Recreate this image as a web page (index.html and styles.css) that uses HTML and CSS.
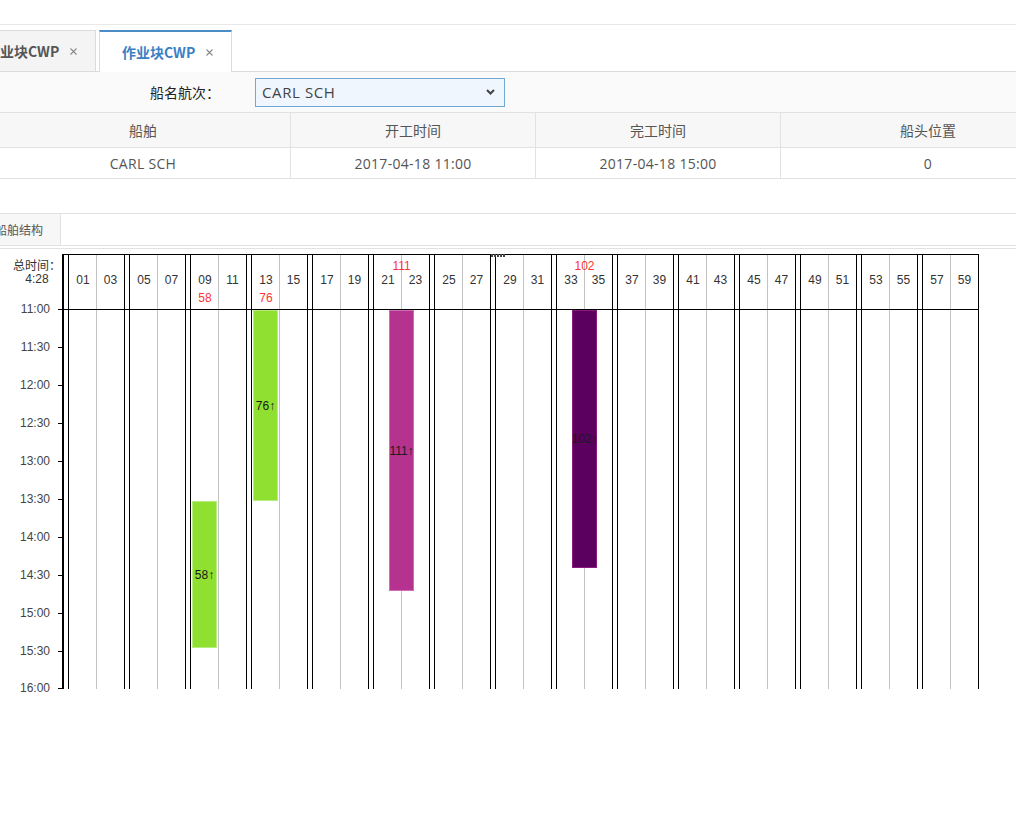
FILE: index.html
```html
<!DOCTYPE html>
<html lang="zh-CN">
<head>
<meta charset="utf-8">
<title>作业块CWP</title>
<link rel="stylesheet" href="styles.css">
</head>
<body>
<div class="topbar"></div>
<div class="tabs">
  <div class="tab first"><span>作业块CWP</span><svg class="close" width="7" height="7" viewBox="0 0 7 7"><path d="M0.5 0.5L6.5 6.5M6.5 0.5L0.5 6.5"/></svg></div>
  <div class="tab active"><span>作业块CWP</span><svg class="close" width="7" height="7" viewBox="0 0 7 7"><path d="M0.5 0.5L6.5 6.5M6.5 0.5L0.5 6.5"/></svg></div>
</div>
<div class="form">
  <span class="label">船名航次：</span>
  <div class="select"><span>CARL SCH</span><svg width="9" height="6" viewBox="0 0 9 6"><path d="M1 1L4.5 4.5L8 1" fill="none" stroke="#444" stroke-width="2"/></svg></div>
</div>
<div class="thead">
  <div class="cell c1">船舶</div><div class="cell c2">开工时间</div><div class="cell c3">完工时间</div><div class="cell c4">船头位置</div>
</div>
<div class="trow">
  <div class="cell c1">CARL SCH</div><div class="cell c2">2017-04-18 11:00</div><div class="cell c3">2017-04-18 15:00</div><div class="cell c4">0</div>
</div>
<div class="spacer"></div>
<div class="subtabs"><div class="subtab">船舶结构</div></div>
<div class="sep"></div>
<div class="chart-wrap">
<div class="chart">
  <div class="axis">
    <div class="axis-title"><div>总时间：</div><div>4:28</div></div>
    <div class="tick" style="top:55px"></div><div class="tlabel" style="top:48px">11:00</div>
    <div class="tick" style="top:93px"></div><div class="tlabel" style="top:86px">11:30</div>
    <div class="tick" style="top:131px"></div><div class="tlabel" style="top:124px">12:00</div>
    <div class="tick" style="top:169px"></div><div class="tlabel" style="top:162px">12:30</div>
    <div class="tick" style="top:207px"></div><div class="tlabel" style="top:200px">13:00</div>
    <div class="tick" style="top:245px"></div><div class="tlabel" style="top:238px">13:30</div>
    <div class="tick" style="top:283px"></div><div class="tlabel" style="top:276px">14:00</div>
    <div class="tick" style="top:321px"></div><div class="tlabel" style="top:314px">14:30</div>
    <div class="tick" style="top:359px"></div><div class="tlabel" style="top:352px">15:00</div>
    <div class="tick" style="top:397px"></div><div class="tlabel" style="top:390px">15:30</div>
    <div class="tick" style="top:434px"></div><div class="tlabel" style="top:427px">16:00</div>
  </div>
  <div class="axis-line"></div>
  <div class="plot">
    <div class="dots"></div>
    <div class="hdr-row">
      <div class="bay bay-h"><div class="r40"></div><div class="nums"><span>01</span><span>03</span></div><div class="r20"><span></span><span></span></div></div>
      <div class="bay bay-h"><div class="r40"></div><div class="nums"><span>05</span><span>07</span></div><div class="r20"><span></span><span></span></div></div>
      <div class="bay bay-h"><div class="r40"></div><div class="nums"><span>09</span><span>11</span></div><div class="r20"><span>58</span><span></span></div></div>
      <div class="bay bay-h"><div class="r40"></div><div class="nums"><span>13</span><span>15</span></div><div class="r20"><span>76</span><span></span></div></div>
      <div class="bay bay-h"><div class="r40"></div><div class="nums"><span>17</span><span>19</span></div><div class="r20"><span></span><span></span></div></div>
      <div class="bay bay-h"><div class="r40">111</div><div class="nums"><span>21</span><span>23</span></div><div class="r20"><span></span><span></span></div></div>
      <div class="bay bay-h"><div class="r40"></div><div class="nums"><span>25</span><span>27</span></div><div class="r20"><span></span><span></span></div></div>
      <div class="bay bay-h"><div class="r40"></div><div class="nums"><span>29</span><span>31</span></div><div class="r20"><span></span><span></span></div></div>
      <div class="bay bay-h"><div class="r40">102</div><div class="nums"><span>33</span><span>35</span></div><div class="r20"><span></span><span></span></div></div>
      <div class="bay bay-h"><div class="r40"></div><div class="nums"><span>37</span><span>39</span></div><div class="r20"><span></span><span></span></div></div>
      <div class="bay bay-h"><div class="r40"></div><div class="nums"><span>41</span><span>43</span></div><div class="r20"><span></span><span></span></div></div>
      <div class="bay bay-h"><div class="r40"></div><div class="nums"><span>45</span><span>47</span></div><div class="r20"><span></span><span></span></div></div>
      <div class="bay bay-h"><div class="r40"></div><div class="nums"><span>49</span><span>51</span></div><div class="r20"><span></span><span></span></div></div>
      <div class="bay bay-h"><div class="r40"></div><div class="nums"><span>53</span><span>55</span></div><div class="r20"><span></span><span></span></div></div>
      <div class="bay bay-h"><div class="r40"></div><div class="nums"><span>57</span><span>59</span></div><div class="r20"><span></span><span></span></div></div>
    </div>
    <div class="body-row">
      <div class="bay bay-b"></div>
      <div class="bay bay-b"></div>
      <div class="bay bay-b"><div class="bar green b20" style="top:191px;height:147px">58↑</div></div>
      <div class="bay bay-b"><div class="bar green b20" style="top:0;height:191px">76↑</div></div>
      <div class="bay bay-b"></div>
      <div class="bay bay-b"><div class="bar magenta b40" style="top:0;height:281px">111↑</div></div>
      <div class="bay bay-b"></div>
      <div class="bay bay-b"></div>
      <div class="bay bay-b"><div class="bar purple b40" style="top:0;height:258px">102↑</div></div>
      <div class="bay bay-b"></div>
      <div class="bay bay-b"></div>
      <div class="bay bay-b"></div>
      <div class="bay bay-b"></div>
      <div class="bay bay-b"></div>
      <div class="bay bay-b"></div>
    </div>
  </div>
</div>
</div>
</body>
</html>
```
FILE: styles.css
```css
html {
  overflow: hidden;
}
html, body {
  margin: 0;
  padding: 0;
  background: #fff;
}
body {
  font-family: "Open Sans", "Noto Sans CJK SC", sans-serif;
  color: #555;
  width: 1016px;
  min-height: 840px;
}
.topbar {
  height: 24px;
  border-bottom: 1px solid #e8e8e8;
}
.tabs {
  display: flex;
  align-items: flex-end;
  gap: 3px;
  height: 41px;
  padding-top: 5px;
  border-bottom: 1px solid #dcdcdc;
}
.tab {
  box-sizing: border-box;
  flex: none;
  width: 133px;
  height: 41px;
  border: 1px solid #dcdcdc;
  border-bottom: none;
  display: flex;
  align-items: center;
  padding-left: 22px;
  font-family: "Noto Sans CJK SC", "Open Sans", sans-serif;
  font-weight: bold;
  font-size: 14px;
}
.tab .close {
  margin-left: 11px;
  stroke: #8a8a8a;
  stroke-width: 1.1;
}
.tab.first {
  margin-left: -37px;
  background: #f4f4f4;
  color: #555;
}
.tab.active {
  background: #fff;
  color: #3b80c3;
  border-top: 2px solid #4a8dc6;
  height: 42px;
  margin-bottom: -1px;
}
.form {
  height: 40px;
  background: #fafafa;
  border-bottom: 1px solid #e2e2e2;
  display: flex;
  align-items: center;
  padding-left: 150px;
}
.label {
  font-family: "Noto Sans CJK SC", sans-serif;
  font-size: 14px;
  color: #222;
  width: 70px;
  margin-right: 35px;
}
.select {
  box-sizing: border-box;
  width: 250px;
  height: 29px;
  border: 1px solid #72a8d4;
  background: #eff6fe;
  display: flex;
  align-items: center;
  justify-content: space-between;
  padding: 0 9px 0 6px;
  font-size: 15px;
  letter-spacing: 0.6px;
  color: #444;
}
.thead, .trow {
  display: flex;
  margin-left: -4px;
}
.thead {
  background: #f7f7f7;
  height: 34px;
  border-bottom: 1px solid #e2e2e2;
}
.trow {
  height: 30px;
  border-bottom: 1px solid #e2e2e2;
}
.cell {
  box-sizing: border-box;
  flex: none;
  border-right: 1px solid #e2e2e2;
  display: flex;
  align-items: center;
  justify-content: center;
  font-size: 14px;
  color: #555;
}
.trow .cell {
  letter-spacing: 0.3px;
}
.c1 { width: 295px; }
.c2 { width: 245px; }
.c3 { width: 245px; }
.c4 { width: 295px; }
.spacer { height: 34px; }
.subtabs {
  display: flex;
  height: 31px;
  border-top: 1px solid #e2e2e2;
  border-bottom: 1px solid #e2e2e2;
}
.subtab {
  margin-left: -10px;
  padding: 0 17px 0 5px;
  background: #f7f7f7;
  border-right: 1px solid #e2e2e2;
  font-family: "Noto Sans CJK SC", sans-serif;
  font-size: 12px;
  color: #555;
  display: flex;
  align-items: center;
}
.sep {
  height: 2px;
  border-bottom: 1px solid #e2e2e2;
}
.chart-wrap {
  padding-top: 5px;
  padding-bottom: 20px;
}
.chart {
  display: flex;
  height: 435px;
  font-family: "Liberation Sans", Arial, sans-serif;
  font-size: 12px;
  color: #333;
}
.axis {
  position: relative;
  width: 62px;
  flex: none;
}
.axis-title {
  position: absolute;
  left: 0;
  top: 4px;
  width: 74px;
  text-align: center;
  line-height: 14px;
  color: #333;
}
.axis-title div:first-child {
  font-family: "Noto Sans CJK SC", sans-serif;
}
.tick {
  position: absolute;
  left: 58px;
  width: 4px;
  height: 1px;
  background: #000;
}
.tlabel {
  position: absolute;
  right: 12px;
  line-height: 14px;
  color: #444;
}
.axis-line {
  width: 2px;
  flex: none;
  background: #000;
}
.plot {
  position: relative;
  display: flex;
  flex-direction: column;
}
.dots {
  position: absolute;
  left: 427px;
  top: 0;
  width: 14px;
  height: 3px;
  background: repeating-linear-gradient(to right, #444 0 2px, transparent 2px 3px);
}
.hdr-row, .body-row {
  display: flex;
  gap: 4px;
  padding-left: 4px;
}
.hdr-row {
  height: 54px;
  border-top: 1px solid #000;
  border-bottom: 1px solid #000;
}
.body-row {
  height: 379px;
}
.bay {
  box-sizing: border-box;
  flex: none;
  width: 57px;
  border-left: 1px solid #000;
  border-right: 1px solid #000;
  background: linear-gradient(to right, transparent 27px, #c3c3c3 27px, #c3c3c3 28px, transparent 28px);
}
.bay-h {
  display: flex;
  flex-direction: column;
  padding-top: 4px;
}
.r40 {
  height: 14px;
  line-height: 14px;
  text-align: center;
  color: #f33;
}
.nums, .r20 {
  display: grid;
  grid-template-columns: 28px 27px;
  height: 14px;
  line-height: 14px;
  text-align: center;
}
.r20 {
  margin-top: 4px;
  color: #f33;
}
.bay-b {
  position: relative;
}
.bar {
  position: absolute;
  box-sizing: border-box;
  width: 25px;
  border: 1px solid;
  display: flex;
  align-items: center;
  justify-content: center;
  white-space: nowrap;
  color: #1a1a1a;
}
.b20 { left: 1px; }
.b40 { left: 15px; }
.green { background: #8fe031; border-color: #b6ee7c; }
.magenta { background: #b5338f; border-color: #d06cb8; }
.purple { background: #5b005e; border-color: #8a1a7c; }
```
